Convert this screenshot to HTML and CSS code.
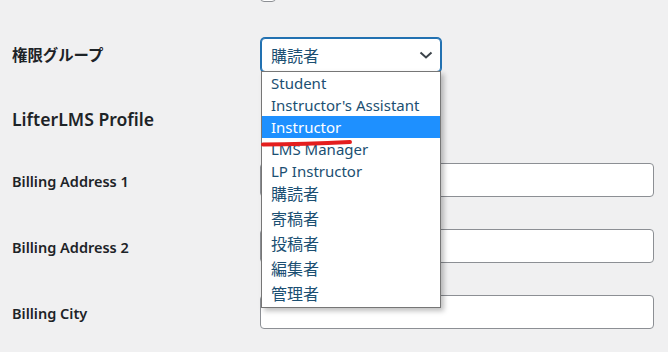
FILE: index.html
```html
<!DOCTYPE html>
<html lang="ja">
<head>
    <meta charset="UTF-8">
    <meta name="viewport" content="width=device-width, initial-scale=1.0">
    <title>ユーザー編集</title>
    <link rel="stylesheet" href="styles.css">
</head>
<body>
    <div class="profile-form">
        <div class="prev-row">
            <span class="checkbox"></span>
        </div>

        <div class="form-row">
            <div class="form-label label-ja">権限グループ</div>
            <div class="form-field">
                <div class="select-wrap">
                    <div class="select-box">
                        <span>購読者</span>
                        <svg class="chevron" width="14" height="8" viewBox="0 0 14 8">
                            <path d="M1.5 1.5 L7 6.5 L12.5 1.5" fill="none" stroke="#3c434a" stroke-width="2"/>
                        </svg>
                    </div>
                    <ul class="select-list">
                        <li>Student</li>
                        <li>Instructor's Assistant</li>
                        <li class="active">Instructor</li>
                        <li>LMS Manager</li>
                        <li>LP Instructor</li>
                        <li class="cjk">購読者</li>
                        <li class="cjk">寄稿者</li>
                        <li class="cjk">投稿者</li>
                        <li class="cjk">編集者</li>
                        <li class="cjk">管理者</li>
                    </ul>
                    <svg class="marker" width="96" height="10" viewBox="0 0 96 10">
                        <path d="M3 6.5 Q45 6 90 4" fill="none" stroke="#e41e1e" stroke-width="4" stroke-linecap="round"/>
                    </svg>
                </div>
            </div>
        </div>

        <h2 class="section-title">LifterLMS Profile</h2>

        <div class="form-row">
            <div class="form-label">Billing Address 1</div>
            <div class="form-field"><input type="text" class="text-input"></div>
        </div>

        <div class="form-row">
            <div class="form-label">Billing Address 2</div>
            <div class="form-field"><input type="text" class="text-input"></div>
        </div>

        <div class="form-row">
            <div class="form-label">Billing City</div>
            <div class="form-field"><input type="text" class="text-input"></div>
        </div>
    </div>
</body>
</html>
```

FILE: styles.css
```css
body {
    margin: 0;
    background: #f0f0f1;
    font-family: 'Noto Sans', 'Noto Sans CJK JP', sans-serif;
    color: #1d2327;
    overflow: hidden;
}

.profile-form {
    padding-left: 12px;
}

.prev-row {
    display: flow-root;
    height: 22px;
    padding-left: 248px;
}

.checkbox {
    display: block;
    width: 14px;
    height: 14px;
    margin-top: -14px;
    border: 1px solid #8c8f94;
    border-radius: 4px;
    background: #fff;
}

.form-row {
    display: flex;
    padding: 16px 0;
}

.form-label {
    width: 248px;
    flex-shrink: 0;
    padding-top: 8px;
    font-size: 14.5px;
    line-height: 20px;
    font-weight: 600;
}

.form-label.label-ja {
    font-size: 15.4px;
}

.form-field {
    flex: 1;
}

.select-wrap {
    position: relative;
    width: 180px;
    margin-left: 1px;
}

.select-box {
    box-sizing: border-box;
    height: 34px;
    display: flex;
    align-items: center;
    justify-content: space-between;
    padding: 0 7px 0 9px;
    background: #fff;
    border: 1px solid #2271b1;
    border-radius: 4px;
    box-shadow: 0 0 0 1px #2271b1;
    font-size: 16px;
    color: #1b4f72;
}

.select-list {
    position: absolute;
    top: 33px;
    left: 0;
    width: 180px;
    box-sizing: border-box;
    margin: 0;
    padding: 0;
    list-style: none;
    background: #fff;
    border: 1px solid #767676;
    box-shadow: 3px 3px 5px rgba(0, 0, 0, 0.25);
    font-size: 15px;
    color: #1b4f72;
    z-index: 2;
}

.select-list li {
    height: 22px;
    line-height: 22px;
    padding-left: 9px;
    white-space: nowrap;
}

.select-list li.cjk {
    height: 25px;
    line-height: 25px;
    font-size: 16px;
}

.select-list li.active {
    background: #1e90ff;
    color: #fff;
}

.marker {
    position: absolute;
    left: -1px;
    top: 100px;
    z-index: 3;
}

.section-title {
    margin: 0;
    height: 59px;
    padding-top: 19px;
    box-sizing: border-box;
    font-size: 17.6px;
    line-height: 24px;
    font-weight: 600;
}

.text-input {
    display: block;
    box-sizing: border-box;
    width: 394px;
    height: 34px;
    margin: 0;
    border: 1px solid #8c8f94;
    border-radius: 4px;
    background: #fff;
}
```
